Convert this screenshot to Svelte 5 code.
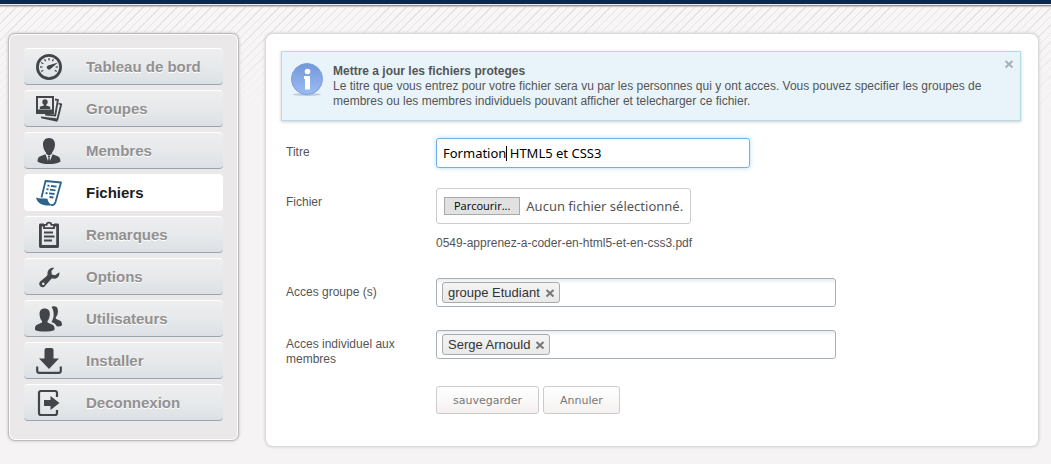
<script>
  const menu = [
    { id: 'gauge', label: 'Tableau de bord' },
    { id: 'groups', label: 'Groupes' },
    { id: 'member', label: 'Membres' },
    { id: 'files', label: 'Fichiers', active: true },
    { id: 'notes', label: 'Remarques' },
    { id: 'options', label: 'Options' },
    { id: 'users', label: 'Utilisateurs' },
    { id: 'install', label: 'Installer' },
    { id: 'logout', label: 'Deconnexion' }
  ];

  let title = $state('Formation HTML5 et CSS3');
  let showNotice = $state(true);
  let groups = $state(['groupe Etudiant']);
  let members = $state(['Serge Arnould']);
  const ticks = [-120, -90, -60, -30, 0, 30, 90, 120];
</script>

{#snippet icon(id)}
  <svg class="icon" viewBox="0 0 28 28" aria-hidden="true">
    {#if id === 'gauge'}
      <circle cx="14" cy="14" r="11.6" fill="none" stroke="currentColor" stroke-width="2.8" />
      {#each ticks as t}
        <path d="M14 5v2.4" stroke="currentColor" stroke-width="1.3" transform="rotate({t} 14 14)" />
      {/each}
      <path d="M13 12.5 23 9.5 15.8 15.8a2.2 2.2 0 1 1-2.8-3.3z" fill="currentColor" />
    {:else if id === 'groups'}
      <path fill="currentColor" fill-rule="evenodd" d="M1 1h18v18H1zM3 3v11.5h14V3z" />
      <circle cx="10" cy="7" r="2.7" fill="currentColor" />
      <path fill="currentColor" d="M8.8 8h2.4v2.5l4 1.2v2.3H4.8v-2.3l4-1.2z" />
      <path fill="none" stroke="currentColor" stroke-width="1.8" d="M20 4.500l2.900.5-2.700 15.500-10-.8" />
      <path fill="none" stroke="currentColor" stroke-width="1.8" d="M23.500 8.500l2.700.8-4 16" />
      <path fill="currentColor" d="M6 21.500l17 2-.7 3.300L6 23.300z" />
    {:else if id === 'member'}
      <path fill="currentColor" d="M14 1c4 0 6.200 2.800 6 6.800-.1 3.800-1.700 6.400-3 7.700v1.300l-3 2-3-2v-1.300C9.700 14.200 8.100 11.600 8 7.800 7.800 3.800 10 1 14 1z" />
      <path fill="currentColor" d="M10.400 17.300 13 24l.5-3.500-.6-1.200 1.100-.8 1.100.8-.6 1.200L15 24l2.600-6.700 5.600 2.200c1.600.7 2.300 3 2.300 5C23 26.500 18.500 27 14 27S5 26.500 2.500 24.500c0-2 .7-4.300 2.300-5z" />
    {:else if id === 'files'}
      <path fill="none" stroke="currentColor" stroke-width="1.800" stroke-linejoin="round" d="M6.500 18.500 10.500 2l15.500 1.500-5.500 19.500c-.8 2.500-2.500 3.500-4.500 3" />
      <path fill="currentColor" d="M1 18.500c3 1.300 7.500.8 11.500 1.300.5 2.600 1 4.200 4.500 6.400C10 27.500 2.500 25.500 1 18.500z" />
      <path stroke="currentColor" stroke-width="1.800" d="M12.500 6.500l2 .3M16 7l5.500.6M11.500 10.200l2 .3M15 10.700l5.500.6M10.600 14l2 .3M14 14.400l5.500.6M14.500 18l4 .5" />
    {:else if id === 'notes'}
      <path fill="none" stroke="currentColor" stroke-width="2.800" stroke-linejoin="round" d="M9 4H5.400v21.500h17.200V4H19" />
      <path fill="none" stroke="currentColor" stroke-width="1.800" d="M9 3.800h2.600c.3-3 4.500-3 4.800 0H19v3.400H9z" />
      <path stroke="currentColor" stroke-width="2" d="M9 11.500h9M9 15.500h10.500M9 19.500h8" />
    {:else if id === 'options'}
      <path fill="currentColor" fill-rule="evenodd" d="M24.300 9.200c.7 4.100-2.600 7.300-6.600 6.400-1 0-1.500.4-2.200 1.200l-5.300 5.900C7.500 26.500 2 22.500 5.200 18.600l6-5.200c1-.8 1.400-1.300 1.300-2.400-.3-4 3-6.900 6.800-6.200l-2.900 3.300.4 3.400 3.400.8zM8.200 19.500a1.300 1.300 0 1 0 .1 0z" />
    {:else if id === 'users'}
      <path fill="currentColor" d="M16.500 2c1.200-1 5.300-1.700 6.200 2 .8 3.400-.2 6.400-1.900 8.200v1.600l4.300 2c1.800.7 2 3 1.800 4.700-1.600.9-3.600 1-5.200.8-1-2.400-3-3.300-5.200-4.200 2.800-4.300 3-11.200 0-15.100z" />
      <path fill="currentColor" d="M9.500 3.500c4 0 5.700 2.700 5.300 6.500-.3 3-1.300 4.800-2.300 6v1.500l5 2.200c1.800.8 2.300 3 2 5.300-4 2-15 2.200-19.500 0-.3-2.300.2-4.500 2-5.300l5-2.200V16c-1.200-1.200-2.100-3-2.400-6-.4-3.800 1.200-6.500 4.900-6.500z" />
    {:else if id === 'install'}
      <path fill="currentColor" d="M9.500 3Q9.500 1 11.500 1h5q2 0 2 2v8.500H24L14 22 4 11.500h5.500z" />
      <path fill="none" stroke="currentColor" stroke-width="2.200" d="M2.200 19.500v4.300q0 2 2 2h19.600q2 0 2-2v-4.300" />
    {:else}
      <path fill="none" stroke="currentColor" stroke-width="2.200" d="M22 8V4q0-2-2-2H6Q4 2 4 4v20q0 2 2 2h14q2 0 2-2v-3" />
      <path fill="currentColor" d="M9 11h6.500V7l9 7-9 7v-4H9z" />
    {/if}
  </svg>
{/snippet}

{#snippet cross()}
  <svg class="cross" viewBox="0 0 10 10" aria-hidden="true"><path d="M1.500 2l7 6.500M8.500 2l-7 6.500" stroke="currentColor" stroke-width="2" /></svg>
{/snippet}

{#snippet chips(id, items, remove)}
  <div class="chips">
    {#each items as item}
      <span class="chip">{item}<button type="button" aria-label="Retirer {item}" onclick={() => remove(item)}>{@render cross()}</button></span>
    {/each}
    <input {id} type="text" autocomplete="off" />
  </div>
{/snippet}

<div class="topbar"></div>
<div class="layout">
  <nav>
    {#each menu as m}
      <a href="#{m.id}" class:active={m.active}>{@render icon(m.id)}<span>{m.label}</span></a>
    {/each}
  </nav>

  <main>
    {#if showNotice}
      <section class="notice">
        <svg class="info" viewBox="0 0 32 34" aria-hidden="true">
          <defs>
            <linearGradient id="blue" x1="0" y1="0" x2="0" y2="1">
              <stop offset="0" stop-color="#7397d8" />
              <stop offset="1" stop-color="#9dbcf5" />
            </linearGradient>
          </defs>
          <ellipse cx="16" cy="31.500" rx="14" ry="1.500" fill="#bccbd8" />
          <circle cx="16" cy="16" r="15.500" fill="url(#blue)" stroke="#7e9edb" />
          <circle cx="16.500" cy="8.500" r="2.800" fill="#fff" />
          <path d="M13 13h6v13.500h-5V16h-1z" fill="#fff" />
        </svg>
        <p><strong>Mettre a jour les fichiers proteges</strong><br />Le titre que vous entrez pour votre fichier sera vu par les personnes qui y ont acces. Vous pouvez specifier les groupes de membres ou les membres individuels pouvant afficher et telecharger ce fichier.</p>
        <button class="close" type="button" aria-label="Fermer" onclick={() => (showNotice = false)}>{@render cross()}</button>
      </section>
    {/if}

    <form onsubmit={(e) => e.preventDefault()}>
      <label class="name" for="titre">Titre</label>
      <div class="title-box">
        <input id="titre" type="text" bind:value={title} />
        <i class="caret"></i>
      </div>

      <label class="name" for="fichier">Fichier</label>
      <div>
        <label class="file">
          <input id="fichier" type="file" />
          <span class="browse">Parcourir...</span>
          <span>Aucun fichier sélectionné.</span>
        </label>
        <p class="current">0549-apprenez-a-coder-en-html5-et-en-css3.pdf</p>
      </div>

      <label class="name" for="groupes">Acces groupe (s)</label>
      {@render chips('groupes', groups, (x) => (groups = groups.filter((g) => g !== x)))}

      <label class="name" for="membres">Acces individuel aux membres</label>
      {@render chips('membres', members, (x) => (members = members.filter((g) => g !== x)))}

      <div class="actions">
        <button type="submit">sauvegarder</button>
        <button type="button">Annuler</button>
      </div>
    </form>
  </main>
</div>

<style>
  :global(body) {
    background:
      linear-gradient(to bottom, rgba(245, 243, 244, 0) 0, #f5f3f4 120px),
      repeating-linear-gradient(135deg, #f8f6f7 0 4px, #e3e0e2 4px 5px, #f8f6f7 5px 6px);
    font-family: "Liberation Sans", Arial, sans-serif;
    font-size: 12px;
    line-height: 15px;
    color: #555;
  }
  :global(html) { background: #f5f3f4; }
  * { box-sizing: border-box; }
  p { margin: 0; }
  input, button { font: inherit; }
  .topbar {
    height: 6px;
    background: linear-gradient(#022b55 0 4px, #e9edf0 4px 5px, #8c9aaa 5px 6px);
    box-shadow: 0 1px 1px #c9c9cc;
  }
  .layout {
    display: flex;
    align-items: flex-start;
    gap: 26px;
    padding: 27px 12px 17px 8px;
  }
  nav {
    flex: 0 0 231px;
    display: flex;
    flex-direction: column;
    gap: 5px;
    padding: 14px 15px 19px;
    border: 1px solid #bdbbbc;
    border-radius: 7px;
    background: #eae8e9;
    box-shadow: inset 0 0 0 1px #fff, 0 0 3px #bbb;
  }
  nav a {
    display: flex;
    align-items: center;
    gap: 23px;
    height: 37px;
    padding-left: 11px;
    border-top: 1px solid #fff;
    border-bottom: 1px solid #98a5b0;
    border-radius: 4px;
    background: linear-gradient(#eeeeef, #e7e9eb 50%, #dce1e5);
    color: #929090;
    font-size: 15px;
    font-weight: bold;
    text-decoration: none;
    text-shadow: 0 1px 0 #fff;
  }
  nav a.active {
    border-color: #fff;
    background: #fff;
    color: #1c1c1c;
  }
  .icon { flex: none; width: 28px; height: 28px; color: #42464a; }
  .active .icon { color: #2b638d; }
  main {
    flex: 1;
    min-width: 0;
    padding: 17px 17px 32px 15px;
    border: 1px solid #dcdadb;
    border-radius: 8px;
    background: #fff;
    box-shadow: 0 0 3px #ccc;
  }
  .notice {
    position: relative;
    display: flex;
    gap: 10px;
    padding: 11px 24px 11px 9px;
    border: 1px solid #b4dbe8;
    background: #e8f4fa;
    box-shadow: 0 1px 3px #ccc;
    min-height: 70px;
  }
  .info { flex: none; width: 32px; height: 34px; }
  .notice p { padding-top: 1px; }
  .cross { display: block; width: 10px; height: 10px; }
  .close {
    position: absolute;
    top: 7px;
    right: 6px;
    padding: 0;
    border: 0;
    background: none;
    color: #aaafb2;
  }
  form {
    display: grid;
    grid-template-columns: 130px minmax(0, 400px);
    column-gap: 20px;
    padding: 17px 0 0 5px;
  }
  .name { padding-top: 7px; }
  .title-box { position: relative; height: 50px; }
  .title-box input {
    width: 314px;
    max-width: 100%;
    height: 30px;
    padding: 0 6px;
    border: 1px solid #6fb2e5;
    border-radius: 3px;
    outline: none;
    background: #fff;
    box-shadow: 0 0 5px #b4dcf8;
    color: #000;
    font-family: "Noto Sans", Verdana, sans-serif;
    font-size: 13px;
  }
  .caret { position: absolute; left: 70px; top: 8px; width: 1px; height: 15px; background: #000; }
  .file {
    position: relative;
    display: inline-flex;
    align-items: center;
    gap: 6px;
    height: 36px;
    padding: 0 7px;
    border: 1px solid #ccc;
    border-radius: 3px;
    color: #555;
    font-family: "Noto Sans", Verdana, sans-serif;
    font-size: 13px;
    white-space: nowrap;
  }
  .file input { position: absolute; width: 1px; height: 1px; opacity: 0; }
  .browse {
    height: 18px;
    padding: 0 9px;
    border: 1px solid #aaa;
    background: #e1e1e1;
    color: #000;
    font-family: "Open Sans", sans-serif;
    font-size: 11px;
    line-height: 16px;
  }
  .current { padding: 12px 0 27px; }
  .chips {
    display: flex;
    flex-wrap: wrap;
    gap: 3px;
    height: 29px;
    margin-bottom: 23px;
    padding: 3px 5px;
    border: 1px solid #a5afb9;
    border-radius: 3px;
    background: linear-gradient(#e9edf1, #fff 5px);
  }
  .chips input { flex: 1; min-width: 20px; height: 21px; border: 0; outline: none; background: none; }
  .chip {
    display: flex;
    align-items: center;
    gap: 5px;
    height: 21px;
    padding: 0 4px 0 5px;
    border: 1px solid #aaa;
    border-radius: 3px;
    background: linear-gradient(#f4f4f4, #e9e9e9);
    color: #333;
    font-size: 13px;
  }
  .chip button { padding: 0; border: 0; background: none; color: #777; }
  .actions { grid-column: 2; display: flex; gap: 4px; padding-top: 4px; }
  .actions button {
    height: 28px;
    padding: 0 16px;
    border: 1px solid #ccc;
    border-radius: 3px;
    background: linear-gradient(#fff, #f5f1f1);
    color: #777;
    font-family: "DejaVu Sans", Verdana, sans-serif;
    font-size: 11px;
  }
</style>
